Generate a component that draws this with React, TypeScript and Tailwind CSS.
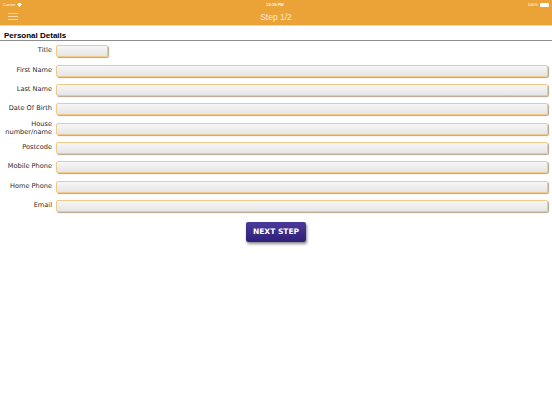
const fields = [
  "First Name",
  "Last Name",
  "Date Of Birth",
  "House\nnumber/name",
  "Postcode",
  "Mobile Phone",
  "Home Phone",
  "Email",
];

function Field({ short }: { short?: boolean }) {
  return (
    <div
      className={`${short ? "w-[52px]" : "flex-1"} h-[12px] rounded-[2px] border border-[#f1c98a] bg-gradient-to-b from-[#f6f6f6] to-[#e6e6e6] shadow-[1px_1px_1px_rgba(120,90,40,0.55)]`}
    />
  );
}

function Row({ label, short }: { label: string; short?: boolean }) {
  return (
    <div className="flex items-center h-[19.35px]">
      <div className="w-[52px] text-right text-[6.6px] leading-[7.5px] text-[#2a2a2a] whitespace-pre-line font-['DejaVu_Sans',sans-serif]">
        {label}
      </div>
      <div className="flex-1 flex pl-[4px] pr-[4px]">
        <Field short={short} />
      </div>
    </div>
  );
}

export default function App() {
  return (
    <div className="w-[552px] h-[414px] bg-white flex flex-col font-['Liberation_Sans',sans-serif]">
      <div className="bg-[#eba337] h-[26px] flex flex-col border-b border-[#f3d7a8]">
        <div className="h-[9px] flex items-center justify-between px-[3px] text-[4px] text-white">
          <div className="flex items-center gap-[2px]">
            <span>Carrier</span>
            <svg width="5" height="4" viewBox="0 0 10 8">
              <path d="M5 8 L0 2.5 A7 7 0 0 1 10 2.5 Z" fill="white" />
            </svg>
          </div>
          <span className="font-bold">12:19 PM</span>
          <div className="flex items-center gap-[2px]">
            <span>100%</span>
            <div className="w-[9px] h-[4px] bg-white rounded-[1px]" />
          </div>
        </div>
        <div className="flex-1 flex items-center relative">
          <div className="absolute left-[8px] top-[4px] flex flex-col gap-[2px]">
            <div className="w-[10px] h-[1px] bg-[#f6d7a6]" />
            <div className="w-[10px] h-[1px] bg-[#f6d7a6]" />
            <div className="w-[10px] h-[1px] bg-[#f6d7a6]" />
          </div>
          <div className="flex-1 text-center text-[8.5px] text-[#fbeacd]">Step 1/2</div>
        </div>
      </div>
      <div className="pt-[5px] px-[4px] text-[8px] font-bold text-black leading-[9px]">Personal Details</div>
      <div className="h-[1px] bg-[#8e8e8e]" />
      <div className="pt-[0.5px] flex flex-col">
        <Row label="Title" short />
        {fields.map((f) => (
          <Row key={f} label={f} />
        ))}
      </div>
      <div className="flex justify-center mt-[6px]">
        <button className="w-[60px] h-[20px] rounded-[2px] bg-gradient-to-b from-[#4b3a9c] to-[#2f1f78] text-white text-[7.5px] font-bold shadow-[1px_2px_3px_rgba(0,0,0,0.45)] font-['DejaVu_Sans',sans-serif]">
          NEXT STEP
        </button>
      </div>
    </div>
  );
}
